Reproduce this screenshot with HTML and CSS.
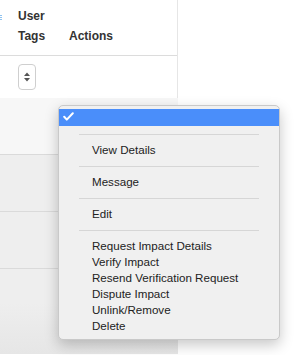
FILE: index.html
```html
<!DOCTYPE html>
<html lang="en">
  <head>
    <meta name="viewport" content="width=device-width, initial-scale=1.0" />
    <link rel="stylesheet" href="styles.css">
  </head>
  <body>
    <div class="panel">
      <div class="table">
        <div class="table-head">
          <div class="cell cell-edge"><span class="edge-mark"></span></div>
          <div class="cell cell-tags">User<br>Tags</div>
          <div class="cell cell-actions">Actions</div>
        </div>
        <div class="table-row">
          <div class="select-box">
            <svg width="8" height="10" viewBox="0 0 8 10">
              <path d="M4 0.5 L7 4 L1 4 Z M4 9.5 L7 6 L1 6 Z" fill="#555"/>
            </svg>
          </div>
        </div>
      </div>
      <div class="rows">
        <div class="row row-light"></div>
        <div class="row"></div>
        <div class="row"></div>
        <div class="row row-last"></div>
      </div>
    </div>

    <div class="menu">
      <div class="menu-item selected">
        <svg class="check" width="11" height="9" viewBox="0 0 11 9">
          <path d="M1.2 4.8 L3.8 7.6 L9.8 1.2" fill="none" stroke="#fff" stroke-width="2" stroke-linecap="round" stroke-linejoin="round"/>
        </svg>
      </div>
      <div class="menu-sep"></div>
      <div class="menu-item">View Details</div>
      <div class="menu-sep"></div>
      <div class="menu-item">Message</div>
      <div class="menu-sep"></div>
      <div class="menu-item">Edit</div>
      <div class="menu-sep"></div>
      <div class="menu-item">Request Impact Details</div>
      <div class="menu-item">Verify Impact</div>
      <div class="menu-item">Resend Verification Request</div>
      <div class="menu-item">Dispute Impact</div>
      <div class="menu-item">Unlink/Remove</div>
      <div class="menu-item">Delete</div>
    </div>
  </body>
</html>
```

FILE: styles.css
```css
body {
  margin: 0;
  background: #fff;
  font-family: "Liberation Sans", Arial, sans-serif;
  height: 355px;
  overflow: hidden;
}

.panel {
  width: 178px;
}

.table {
  width: 177px;
  border-right: 1px solid #e6e6e6;
}
.table-head {
  display: flex;
  align-items: flex-end;
  height: 56px;
  box-sizing: border-box;
  padding: 7px 0 9px;
  border-bottom: 1px solid #dcdcdc;
  font-size: 12px;
  font-weight: bold;
  line-height: 20px;
  color: #333;
}
.cell-edge {
  width: 18px;
  align-self: flex-start;
  height: 20px;
  position: relative;
}
.edge-mark {
  position: absolute;
  left: 0;
  top: 8px;
  width: 2px;
  height: 5px;
  background: repeating-linear-gradient(#8fc3f0 0 1px, transparent 1px 2px);
}
.cell-tags {
  width: 51px;
}
.table-row {
  height: 42px;
  box-sizing: border-box;
  padding: 8px 0 0 18px;
}
.select-box {
  width: 18px;
  height: 26px;
  box-sizing: border-box;
  border: 1px solid #cfcfcf;
  border-radius: 4px;
  background: #fff;
  display: flex;
  align-items: center;
  justify-content: center;
}

.rows {
  display: flex;
  flex-flow: column;
}
.row {
  height: 57px;
  box-sizing: border-box;
  background: #eeeeee;
  border-top: 1px solid #dadada;
}
.row-light {
  height: 56px;
  background: #f7f7f7;
  border-top: none;
}
.row-last {
  height: 86px;
  background: linear-gradient(#eeeeee 40%, #e6e6e6);
}

.menu {
  position: absolute;
  left: 58px;
  top: 105px;
  width: 222px;
  box-sizing: border-box;
  padding: 3px 0 5px;
  background: #f0f0f0;
  border: 1px solid #c9c9c9;
  border-radius: 5px;
  box-shadow: 0 5px 14px rgba(0, 0, 0, 0.22);
  font-size: 11.6px;
  line-height: 16px;
  color: #222;
}
.menu-item {
  height: 16px;
  padding-left: 33px;
  white-space: nowrap;
}
.menu-item.selected {
  height: 17px;
  padding-left: 0;
  background: #4a8efa;
  position: relative;
}
.check {
  position: absolute;
  left: 4px;
  top: 3px;
}
.menu-sep {
  height: 16px;
  margin: 0 20px;
  display: flex;
  align-items: center;
}
.menu-sep::before {
  content: "";
  flex: 1;
  height: 1px;
  background: #d6d6d6;
}
```
